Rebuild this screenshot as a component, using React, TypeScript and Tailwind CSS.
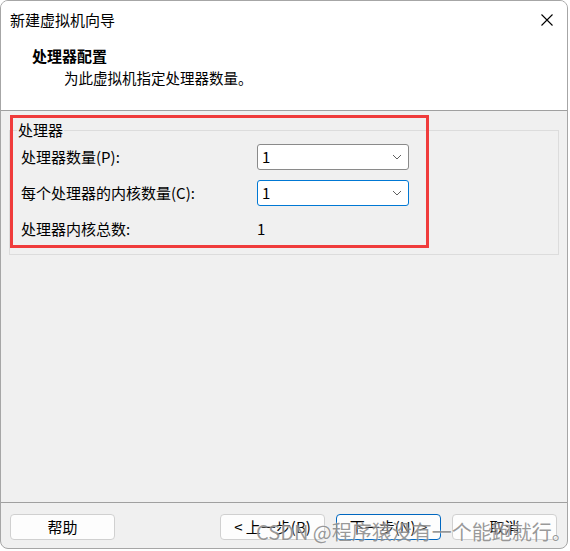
import React from "react";

function Chevron() {
  return (
    <svg width="10" height="6" viewBox="0 0 10 6" className="shrink-0">
      <path d="M1 1 L5 5 L9 1" fill="none" stroke="#606060" strokeWidth="1" />
    </svg>
  );
}

function Combo({ focused }: { focused?: boolean }) {
  return (
    <div
      className={
        focused
          ? "h-[26px] w-[152px] bg-white border border-[#0078d4] rounded-[3px] flex items-center justify-between pl-[4px] pr-[6px]"
          : "h-[26px] w-[152px] bg-white border border-[#8a8a8a] rounded-[3px] flex items-center justify-between pl-[4px] pr-[6px]"
      }
    >
      <span className="leading-[20px]">1</span>
      <Chevron />
    </div>
  );
}

function Btn({ children, primary }: { children: React.ReactNode; primary?: boolean }) {
  return (
    <div
      className={
        primary
          ? "h-[26px] w-[105px] bg-[#fdfdfd] border border-[#0067c0] rounded-[4px] flex items-center justify-center leading-[20px]"
          : "h-[26px] w-[105px] bg-[#fdfdfd] border border-[#d0d0d0] rounded-[4px] flex items-center justify-center leading-[20px]"
      }
    >
      {children}
    </div>
  );
}

export default function App() {
  return (
    <div className="w-[570px] h-[551px] bg-white">
      <div className="relative w-[568px] h-[549px] border border-[#a6a6a6] rounded-[8px] overflow-hidden flex flex-col bg-[#f0f0f0] text-[15px] text-black font-['Noto_Sans_CJK_SC',sans-serif]">
        {/* title bar */}
        <div className="h-[38px] bg-white flex items-center justify-between pl-[9px] pr-[14px]">
          <span className="leading-[20px]">新建虚拟机向导</span>
          <svg width="12" height="12" viewBox="0 0 12 12">
            <path d="M0.5 0.5 L11.5 11.5 M11.5 0.5 L0.5 11.5" stroke="#000" strokeWidth="1.1" />
          </svg>
        </div>
        {/* header */}
        <div className="h-[71px] bg-white pl-[31px] pt-[7px]">
          <div className="font-bold leading-[20px]">处理器配置</div>
          <div className="leading-[20px] mt-[2px] pl-[32px] text-[14.5px]">为此虚拟机指定处理器数量。</div>
        </div>
        <div className="h-px bg-[#a0a0a0]" />
        {/* content */}
        <div className="flex-1 px-[8px] pt-[9px]">
          <fieldset className="border border-[#dcdcdc] pl-[7px] pb-[12px]">
            <legend className="px-[1px] leading-[20px]">处理器</legend>
            <div className="ml-[4px] mt-[4px] grid grid-cols-[236px_152px] gap-y-[10px]">
              <div className="h-[26px] flex items-center leading-[20px]">处理器数量(P):</div>
              <Combo />
              <div className="h-[26px] flex items-center leading-[20px]">每个处理器的内核数量(C):</div>
              <Combo focused />
              <div className="h-[26px] flex items-center leading-[20px]">处理器内核总数:</div>
              <div className="h-[26px] flex items-center leading-[20px]">1</div>
            </div>
          </fieldset>
        </div>
        <div className="h-px bg-[#a0a0a0]" />
        {/* footer */}
        <div className="h-[45px] flex items-start pt-[11px] pl-[9px] pr-[10px]">
          <Btn>帮助</Btn>
          <div className="flex-1" />
          <div className="flex gap-[11px]">
            <Btn>&lt; 上一步(B)</Btn>
            <Btn primary>下一步(N) &gt;</Btn>
            <Btn>取消</Btn>
          </div>
        </div>

        {/* red annotation box */}
        <div className="absolute left-[9px] top-[114px] w-[419px] h-[133px] border-[3px] border-[#f03c3c] pointer-events-none" />

        {/* watermark */}
        <div className="absolute left-[255px] top-[519px] text-[20px] leading-[24px] whitespace-nowrap text-[rgba(120,120,120,0.75)] [text-shadow:0_0_2px_rgba(255,255,255,0.9)] pointer-events-none">
          CSDN @程序猿没有一个能跑就行。
        </div>
      </div>
    </div>
  );
}
